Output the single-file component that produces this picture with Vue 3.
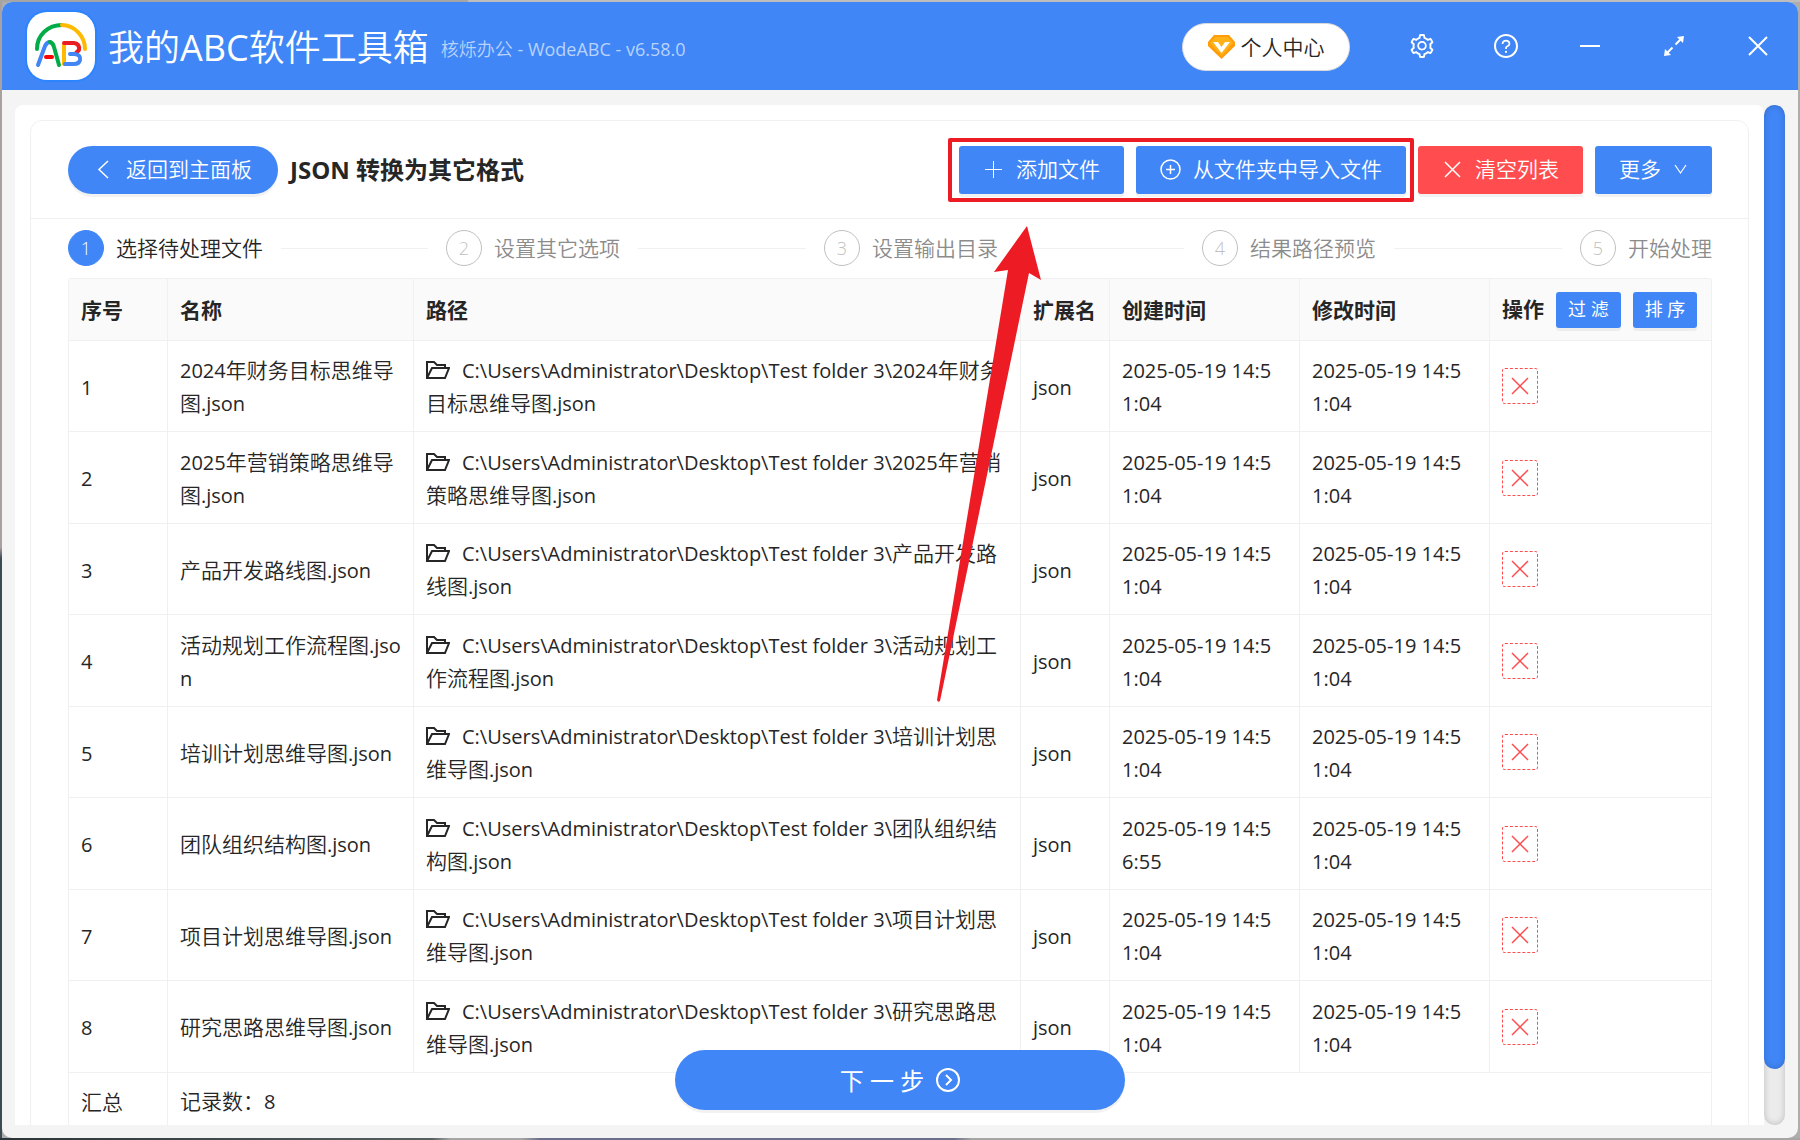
<script setup>
import { ref } from 'vue'

const steps = ['选择待处理文件', '设置其它选项', '设置输出目录', '结果路径预览', '开始处理']
const currentStep = ref(0)

const folder = 'C:\\Users\\Administrator\\Desktop\\Test folder 3\\'
const modified = '2025-05-19 14:51:04'
const files = ref([
  { year: '2024', name: '年财务目标思维导图', created: '2025-05-19 14:51:04' },
  { year: '2025', name: '年营销策略思维导图', created: '2025-05-19 14:51:04' },
  { year: '', name: '产品开发路线图', created: '2025-05-19 14:51:04' },
  { year: '', name: '活动规划工作流程图', created: '2025-05-19 14:51:04' },
  { year: '', name: '培训计划思维导图', created: '2025-05-19 14:51:04' },
  { year: '', name: '团队组织结构图', created: '2025-05-19 14:56:55' },
  { year: '', name: '项目计划思维导图', created: '2025-05-19 14:51:04' },
  { year: '', name: '研究思路思维导图', created: '2025-05-19 14:51:04' },
])
</script>

<template>
  <div class="desktop">
    <div class="window">
      <header class="titlebar">
        <svg class="logo" viewBox="0 0 68 68" aria-hidden="true">
          <g fill="none" stroke-width="4" stroke-linecap="round" stroke-linejoin="round">
            <path d="M10 37C10 23 21 13 35 13" stroke="#00ac47" />
            <path d="M35 13C47 13 58 24 58 37" stroke="#ffba00" />
            <path d="M11 53L18 34Q20 30 23 30" stroke="#4285f4" />
            <path d="M23 30Q26 31 27 35L32 53" stroke="#00ac47" />
            <path d="M19 45H25" stroke="#f00" />
            <path d="M37 52V33" stroke="#ffba00" />
            <path d="M37 31H47Q53 32 52 38L49 41" stroke="#ea1c24" />
            <path d="M43 42H48Q54 43 53 48Q52 52 47 52H38" stroke="#4285f4" />
          </g>
        </svg>
        <h1>我的<span class="latin">ABC</span>软件工具箱</h1>
        <p class="version">核烁办公<span class="latin"> - WodeABC - v6.58.0</span></p>
        <button class="account" type="button">
          <svg width="27" height="24" viewBox="0 0 27 24" aria-hidden="true">
            <path d="M6 0H21L27 7V11L13.500 24L0 11V7Z" fill="#ff9d0a" />
            <path d="M7 2H20L25 8L13.500 21L2 8Z" fill="#ffb11a" />
            <path d="M5 7H10L13.500 12L17 7H22L13.500 18Z" fill="#fff" />
          </svg>
          个人中心
        </button>
        <nav class="controls">
          <button type="button" aria-label="设置">
            <svg width="24" height="24" viewBox="64 64 896 896" fill="currentColor"><path d="M924.800 625.700l-65.500-56c3.100-19 4.700-38.400 4.700-57.800s-1.600-38.800-4.700-57.800l65.500-56a32.030 32.030 0 009.300-35.200l-.9-2.600a443.740 443.740 0 00-79.700-137.900l-1.800-2.100a32.120 32.120 0 00-35.100-9.500l-81.300 28.900c-30-24.600-63.500-44-99.700-57.600l-15.700-85a32.050 32.050 0 00-25.800-25.700l-2.700-.5c-52.100-9.400-106.900-9.400-159 0l-2.700.5a32.050 32.050 0 00-25.800 25.700l-15.800 85.400a351.860 351.860 0 00-99 57.400l-81.900-29.100a32 32 0 00-35.100 9.500l-1.800 2.100a446.020 446.020 0 00-79.700 137.900l-.9 2.600c-4.500 12.500-.8 26.500 9.300 35.200l66.300 56.600c-3.100 18.800-4.600 38-4.600 57.100 0 19.200 1.500 38.400 4.600 57.100L99 625.500a32.030 32.030 0 00-9.300 35.200l.9 2.600c18.100 50.400 44.900 96.900 79.700 137.900l1.800 2.100a32.120 32.120 0 0035.100 9.500l81.900-29.100c29.800 24.500 63.100 43.900 99 57.400l15.800 85.400a32.050 32.050 0 0025.800 25.700l2.700.5a449.400 449.400 0 00159 0l2.700-.5a32.050 32.050 0 0025.800-25.700l15.700-85a350 350 0 0099.700-57.600l81.300 28.900a32 32 0 0035.100-9.500l1.800-2.100c34.800-41.100 61.600-87.500 79.700-137.900l.9-2.600c4.500-12.300.8-26.300-9.300-35zM788.300 465.900c2.500 15.100 3.800 30.600 3.800 46.100s-1.300 31-3.800 46.100l-6.600 40.100 74.700 63.900a370.030 370.030 0 01-42.600 73.600L721 702.800l-31.400 25.800c-23.900 19.600-50.500 35-79.300 45.800l-38.100 14.300-17.900 97a377.500 377.500 0 01-85 0l-17.900-97.200-37.800-14.500c-28.500-10.800-55-26.200-78.700-45.700l-31.400-25.900-93.400 33.200c-17-22.900-31.200-47.600-42.600-73.600l75.500-64.500-6.500-40c-2.400-14.900-3.700-30.300-3.700-45.500 0-15.300 1.200-30.600 3.700-45.500l6.500-40-75.500-64.500c11.300-26.100 25.600-50.700 42.600-73.600l93.400 33.200 31.400-25.900c23.700-19.500 50.200-34.900 78.700-45.700l37.900-14.300 17.900-97.200c28.100-3.200 56.800-3.200 85 0l17.900 97 38.100 14.300c28.700 10.800 55.400 26.200 79.300 45.800l31.400 25.800 92.800-32.900c17 22.900 31.200 47.600 42.600 73.600L781.800 426l6.500 39.900zM512 326c-97.200 0-176 78.800-176 176s78.800 176 176 176 176-78.800 176-176-78.800-176-176-176zm79.200 255.200A111.600 111.600 0 01512 614c-29.900 0-58-11.700-79.200-32.800A111.600 111.600 0 01400 502c0-29.900 11.700-58 32.800-79.200C454 401.600 482.100 390 512 390c29.900 0 58 11.600 79.200 32.800A111.600 111.600 0 01624 502c0 29.900-11.700 58-32.800 79.200z" /></svg>
          </button>
          <button type="button" aria-label="帮助">
            <svg width="24" height="24" viewBox="64 64 896 896" fill="currentColor"><path d="M512 64C264.600 64 64 264.600 64 512s200.600 448 448 448 448-200.600 448-448S759.400 64 512 64zm0 820c-205.400 0-372-166.600-372-372s166.600-372 372-372 372 166.600 372 372-166.600 372-372 372z" /><path d="M623.600 316.700C593.600 290.400 554 276 512 276s-81.600 14.500-111.600 40.700C369.200 344 352 380.700 352 420v7.600c0 4.400 3.600 8 8 8h48c4.400 0 8-3.600 8-8V420c0-44.100 43.100-80 96-80s96 35.900 96 80c0 31.100-22 59.600-56.100 72.700-21.200 8.100-39.200 22.300-52.100 40.900-13.100 19-19.900 41.800-19.900 64.900V620c0 4.400 3.600 8 8 8h48c4.400 0 8-3.600 8-8v-22.700a48.300 48.300 0 0130.900-44.800c59-22.700 97.100-74.700 97.100-132.500.1-39.300-17.100-76-48.300-103.300zM472 732a40 40 0 1080 0 40 40 0 10-80 0z" /></svg>
          </button>
          <button type="button" aria-label="最小化">
            <svg width="24" height="24" viewBox="0 0 24 24"><path d="M2 12H22" stroke="currentColor" stroke-width="2" /></svg>
          </button>
          <button type="button" aria-label="最大化">
            <svg width="24" height="24" viewBox="0 0 24 24"><path d="M13.500 10.500L19 5M10.500 13.500L5 19" stroke="currentColor" stroke-width="2" /><path d="M22 2L21 9L15 3ZM2 22L3 15L9 21Z" fill="currentColor" /></svg>
          </button>
          <button type="button" aria-label="关闭">
            <svg width="24" height="24" viewBox="0 0 24 24"><path d="M3 3L21 21M21 3L3 21" stroke="currentColor" stroke-width="2" /></svg>
          </button>
        </nav>
      </header>

      <div class="body">
        <main class="panel">
          <section class="card">
            <div class="toolbar">
              <button class="btn round" type="button">
                <svg width="21" height="21" viewBox="0 0 21 21"><path d="M15 2L6 10.500L15 19" fill="none" stroke="currentColor" stroke-width="1.500" /></svg>
                返回到主面板
              </button>
              <h2><span class="latin">JSON </span>转换为其它格式</h2>
              <div class="actions">
                <div class="marked">
                  <button class="btn" type="button">
                    <svg width="21" height="21" viewBox="0 0 21 21"><path d="M10.500 2V19M2 10.500H19" stroke="currentColor" stroke-width="1" /></svg>
                    添加文件
                  </button>
                  <button class="btn" type="button">
                    <svg width="21" height="21" viewBox="0 0 21 21"><g fill="none" stroke="currentColor" stroke-width="1.500"><circle cx="10.500" cy="10.500" r="9.500" /><path d="M10.500 6V15M6 10.500H15" /></g></svg>
                    从文件夹中导入文件
                  </button>
                  <svg class="arrow" width="108" height="477" viewBox="0 0 108 477" aria-hidden="true">
                    <path d="M92 0L106 54L94 47L5 475Q3 477 2 474L73 44L59 46Z" fill="#ed1c24" />
                  </svg>
                </div>
                <button class="btn danger" type="button">
                  <svg width="21" height="21" viewBox="0 0 21 21"><path d="M3 3L18 18M18 3L3 18" stroke="currentColor" stroke-width="1.500" /></svg>
                  清空列表
                </button>
                <button class="btn" type="button">
                  更多
                  <svg width="15" height="15" viewBox="0 0 15 15"><path d="M2 3L7.500 11L13 3" fill="none" stroke="currentColor" stroke-width="1.200" /></svg>
                </button>
              </div>
            </div>

            <div class="content">
              <ol class="steps">
                <li v-for="(step, i) in steps" :key="step" :class="{ active: i === currentStep }">
                  <span class="num">{{ i + 1 }}</span>
                  <span class="label">{{ step }}</span>
                </li>
              </ol>

              <table>
                <colgroup>
                  <col class="c-no" /><col class="c-name" /><col class="c-path" /><col class="c-ext" />
                  <col class="c-time" /><col class="c-time" /><col class="c-op" />
                </colgroup>
                <thead>
                  <tr>
                    <th>序号</th>
                    <th>名称</th>
                    <th>路径</th>
                    <th>扩展名</th>
                    <th>创建时间</th>
                    <th>修改时间</th>
                    <th>
                      <div class="ops">
                        操作
                        <button class="btn small" type="button">过 滤</button>
                        <button class="btn small" type="button">排 序</button>
                      </div>
                    </th>
                  </tr>
                </thead>
                <tbody>
                  <tr v-for="(file, i) in files" :key="file.name">
                    <td class="latin">{{ i + 1 }}</td>
                    <td><span v-if="file.year" class="latin">{{ file.year }}</span>{{ file.name }}<span class="latin">.json</span></td>
                    <td>
                      <svg class="folder" width="24" height="24" viewBox="0 0 24 24" aria-hidden="true"><path d="M1 20V4H8L11 7H19V10M1 20L6 10H23L19 20Z" fill="none" stroke="currentColor" stroke-width="2" /></svg><span class="latin">{{ folder }}{{ file.year }}</span>{{ file.name }}<span class="latin">.json</span>
                    </td>
                    <td class="latin">json</td>
                    <td class="latin">{{ file.created }}</td>
                    <td class="latin">{{ modified }}</td>
                    <td>
                      <button class="remove" type="button" aria-label="移除">
                        <svg width="20" height="20" viewBox="0 0 20 20"><path d="M2 2L18 18M18 2L2 18" stroke="currentColor" stroke-width="1.500" /></svg>
                      </button>
                    </td>
                  </tr>
                </tbody>
                <tfoot>
                  <tr>
                    <td>汇总</td>
                    <td colspan="6">记录数：<span class="latin">8</span></td>
                  </tr>
                </tfoot>
              </table>
            </div>
          </section>
        </main>
        <div class="track"><div class="thumb"></div></div>
      </div>

      <button class="next" type="button">
        下 一 步
        <svg width="24" height="24" viewBox="0 0 24 24"><g fill="none" stroke="currentColor" stroke-width="2"><circle cx="12" cy="12" r="11" /><path d="M10 7L15 12L10 17" /></g></svg>
      </button>
    </div>
  </div>
</template>

<style>
body {
  margin: 0;
}
</style>

<style scoped>
* {
  box-sizing: border-box;
}

.desktop {
  height: 100vh;
  padding: 2px;
  overflow: hidden;
  background:
    linear-gradient(90deg, #a5a5a5 26%, #bdbdbd 26%) top / 100% 2px no-repeat,
    linear-gradient(90deg, #2b3436, #55605f 24%, #a5a5a5 25% 29%, #6c6f8a 30% 53%, #a5a5a5 54%) bottom / 100% 2px no-repeat,
    linear-gradient(#a9a0a0 48%, #3d4b55 49%) left / 2px 100% no-repeat,
    #adadad;
  color: #262626;
  font: 350 21px/33px "Open Sans", "Noto Sans CJK SC", sans-serif;
}

button {
  font: inherit;
  cursor: pointer;
}

svg {
  display: block;
  flex: none;
}

.latin {
  font-size: 20px;
  font-weight: 400;
}

.window {
  position: relative;
  display: flex;
  flex-direction: column;
  height: 100%;
  overflow: hidden;
  border-radius: 10px;
  background: #f4f4f4;
}

.titlebar {
  display: flex;
  align-items: center;
  height: 88px;
  padding-left: 25px;
  background: #4086f7;
  color: #fff;
}

.logo {
  width: 68px;
  height: 68px;
  border-radius: 20px;
  background: #fff;
  box-shadow: 0 0 0 2px #2d84ff;
}

h1 {
  margin: 3px 0 0 13px;
  font-size: 36px;
  font-weight: 350;
}

h1 .latin {
  font-size: 36px;
}

.version {
  margin: 6px 0 0 12px;
  color: #b9d3fc;
  font-size: 18px;
}

.version .latin {
  font-size: 18px;
  white-space: pre;
}

.account {
  display: flex;
  align-items: center;
  justify-content: center;
  gap: 6px;
  width: 168px;
  height: 48px;
  margin: 2px 0 0 auto;
  border: 1px solid #d9d9d9;
  border-radius: 24px;
  background: #fff;
  color: #262626;
}

.controls {
  display: flex;
  margin: 0 -2px 0 30px;
}

.controls button {
  display: flex;
  align-items: center;
  justify-content: center;
  width: 84px;
  height: 84px;
  padding: 0;
  border: 0;
  background: none;
  color: #fff;
}

.body {
  display: flex;
  flex: 1;
  min-height: 0;
  padding: 15px 13px 13px;
}

.panel {
  flex: 1;
  padding: 15px;
  overflow: hidden;
  border-radius: 8px 8px 0 0;
  background: #fff;
}

.card {
  border: 1px solid #f0f0f0;
  border-radius: 12px;
}

.track {
  width: 21px;
  border-radius: 11px;
  background: #ebebeb;
  box-shadow: inset 0 0 6px rgba(0, 0, 0, 0.2);
}

.thumb {
  height: 94.5%;
  border-radius: 11px;
  background: #4086f7;
  box-shadow: inset 0 0 6px rgba(0, 0, 0, 0.2);
}

.toolbar {
  display: flex;
  align-items: center;
  gap: 12px;
  height: 98px;
  padding: 0 36px 0 37px;
  border-bottom: 1px solid #f0f0f0;
}

.actions,
.marked {
  display: flex;
  gap: 12px;
}

.actions {
  margin-left: auto;
}

.marked {
  position: relative;
}

.marked::after {
  content: "";
  position: absolute;
  inset: -8px -8px -8px -11px;
  border: 4px solid #ed1c24;
  border-radius: 2px;
  pointer-events: none;
}

.arrow {
  position: absolute;
  z-index: 2;
  top: 80px;
  left: -24px;
  pointer-events: none;
}

.btn {
  display: flex;
  align-items: center;
  gap: 12px;
  height: 48px;
  padding: 0 24px;
  border: 0;
  border-radius: 3px;
  background: #4086f7;
  box-shadow: 0 3px 0 rgba(0, 0, 0, 0.05);
  color: #fff;
  white-space: nowrap;
}

.round {
  padding: 0 26px 0 25px;
  border-radius: 24px;
}

.danger {
  background: #ff4d4f;
}

.small {
  height: 36px;
  padding: 0 12px;
  font-size: 18px;
}

h2 {
  margin: 0;
  font-size: 24px;
  font-weight: 700;
}

h2 .latin {
  font-size: 24px;
  font-weight: 700;
  white-space: pre;
}

.content {
  padding: 11px 36px 24px 37px;
}

.steps {
  display: flex;
  gap: 18px;
  margin: 0 0 12px;
  padding: 0;
  list-style: none;
}

.steps li {
  display: flex;
  align-items: center;
  flex: 1;
  color: #8c8c8c;
}

.steps li:last-child {
  flex: none;
}

.steps li:not(:last-child)::after {
  content: "";
  flex: 1;
  height: 1px;
  margin-left: 18px;
  background: #f0f0f0;
}

.num {
  width: 36px;
  height: 36px;
  margin-right: 12px;
  border: 1px solid #bfbfbf;
  border-radius: 50%;
  color: #bfbfbf;
  font-size: 18px;
  line-height: 34px;
  text-align: center;
}

.steps .active {
  color: #262626;
}

.active .num {
  border-color: #4086f7;
  background: #4086f7;
  color: #fff;
}

table {
  width: 100%;
  table-layout: fixed;
  border-collapse: separate;
  border-spacing: 0;
  border: 1px solid #f0f0f0;
  border-width: 1px 0 0 1px;
  border-radius: 3px 3px 0 0;
}

.c-no { width: 99px; }
.c-name { width: 246px; }
.c-ext { width: 89px; }
.c-time { width: 190px; }
.c-op { width: 222px; }

th,
td {
  padding: 13px 12px 11px;
  border: 1px solid #f0f0f0;
  border-width: 0 1px 1px 0;
  text-align: left;
  word-break: break-all;
}

th:last-child,
td:last-child {
  padding: 12px;
}

th {
  height: 62px;
  background: #fafafa;
  font-weight: 700;
}

tbody td {
  height: 91px;
}

tbody tr:nth-child(even) td {
  height: 92px;
}

.ops {
  display: flex;
  align-items: center;
  gap: 12px;
  white-space: nowrap;
}

.ops .btn {
  font-weight: 400;
}

.folder {
  display: inline-block;
  margin-right: 12px;
  vertical-align: -4px;
}

.remove {
  display: flex;
  align-items: center;
  justify-content: center;
  width: 36px;
  height: 36px;
  padding: 0;
  border: 1px dashed #ff4d4f;
  border-radius: 3px;
  background: #fff;
  color: #ff4d4f;
}

.next {
  position: absolute;
  z-index: 3;
  bottom: 28px;
  left: 50%;
  display: flex;
  align-items: center;
  justify-content: center;
  gap: 12px;
  width: 450px;
  height: 60px;
  margin-left: -225px;
  border: 0;
  border-radius: 30px;
  background: #4086f7;
  box-shadow: 0 3px 0 rgba(0, 0, 0, 0.05);
  color: #fff;
  font-size: 24px;
  font-weight: 400;
}
</style>
